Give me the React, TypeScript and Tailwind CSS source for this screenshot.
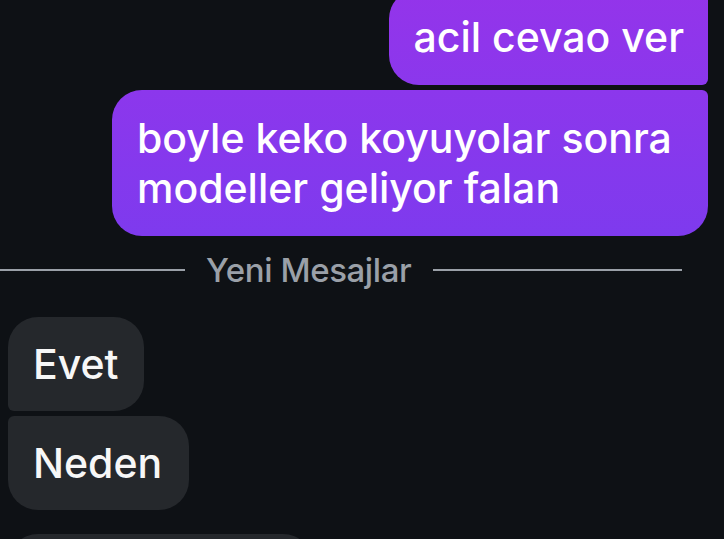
import React from "react";

const font = { fontFamily: "Inter, 'Noto Sans', sans-serif" };

export default function App() {
  return (
    <div
      className="w-[724px] h-[539px] overflow-hidden bg-[#0e1115] flex flex-col"
      style={font}
    >
      <div className="flex flex-col items-end pr-[16px] gap-[5px] mt-[-11px]">
        <div className="rounded-[30px] rounded-tr-[6px] rounded-br-[6px] bg-gradient-to-b from-[#9434ea] to-[#8b37ec] px-[24px] py-[23px] text-white text-[41px] leading-[50px] font-medium">
          acil cevao ver
        </div>
        <div className="w-[596px] rounded-[30px] rounded-tr-[6px] bg-gradient-to-b from-[#8c37ec] to-[#7e3aee] px-[25px] py-[23px] text-white text-[41px] leading-[50px] font-medium">
          boyle keko koyuyolar sonra modeller geliyor falan
        </div>
      </div>

      <div className="flex items-center mt-[19px] h-[30px]">
        <div className="w-[185px] h-[2px] bg-[#9aa0a8]" />
        <div className="ml-[21px] text-[33px] leading-[30px] font-medium text-[#9aa0a8] tracking-[-0.4px]">
          Yeni Mesajlar
        </div>
        <div className="ml-[22px] w-[249px] h-[2px] bg-[#9aa0a8]" />
      </div>

      <div className="flex flex-col items-start pl-[8px] mt-[32px] gap-[5px]">
        <div className="rounded-[30px] rounded-bl-[6px] bg-[#25282c] px-[25px] py-[22px] text-[#f7f7f7] text-[41px] leading-[50px] font-medium">
          Evet
        </div>
        <div className="rounded-[30px] rounded-tl-[6px] bg-[#25282c] pl-[25px] pr-[27px] py-[22px] text-[#f7f7f7] text-[41px] leading-[50px] font-medium">
          Neden
        </div>
        <div className="mt-[19px] w-[305px] h-[94px] rounded-[30px] bg-[#25282c]" />
      </div>
    </div>
  );
}
